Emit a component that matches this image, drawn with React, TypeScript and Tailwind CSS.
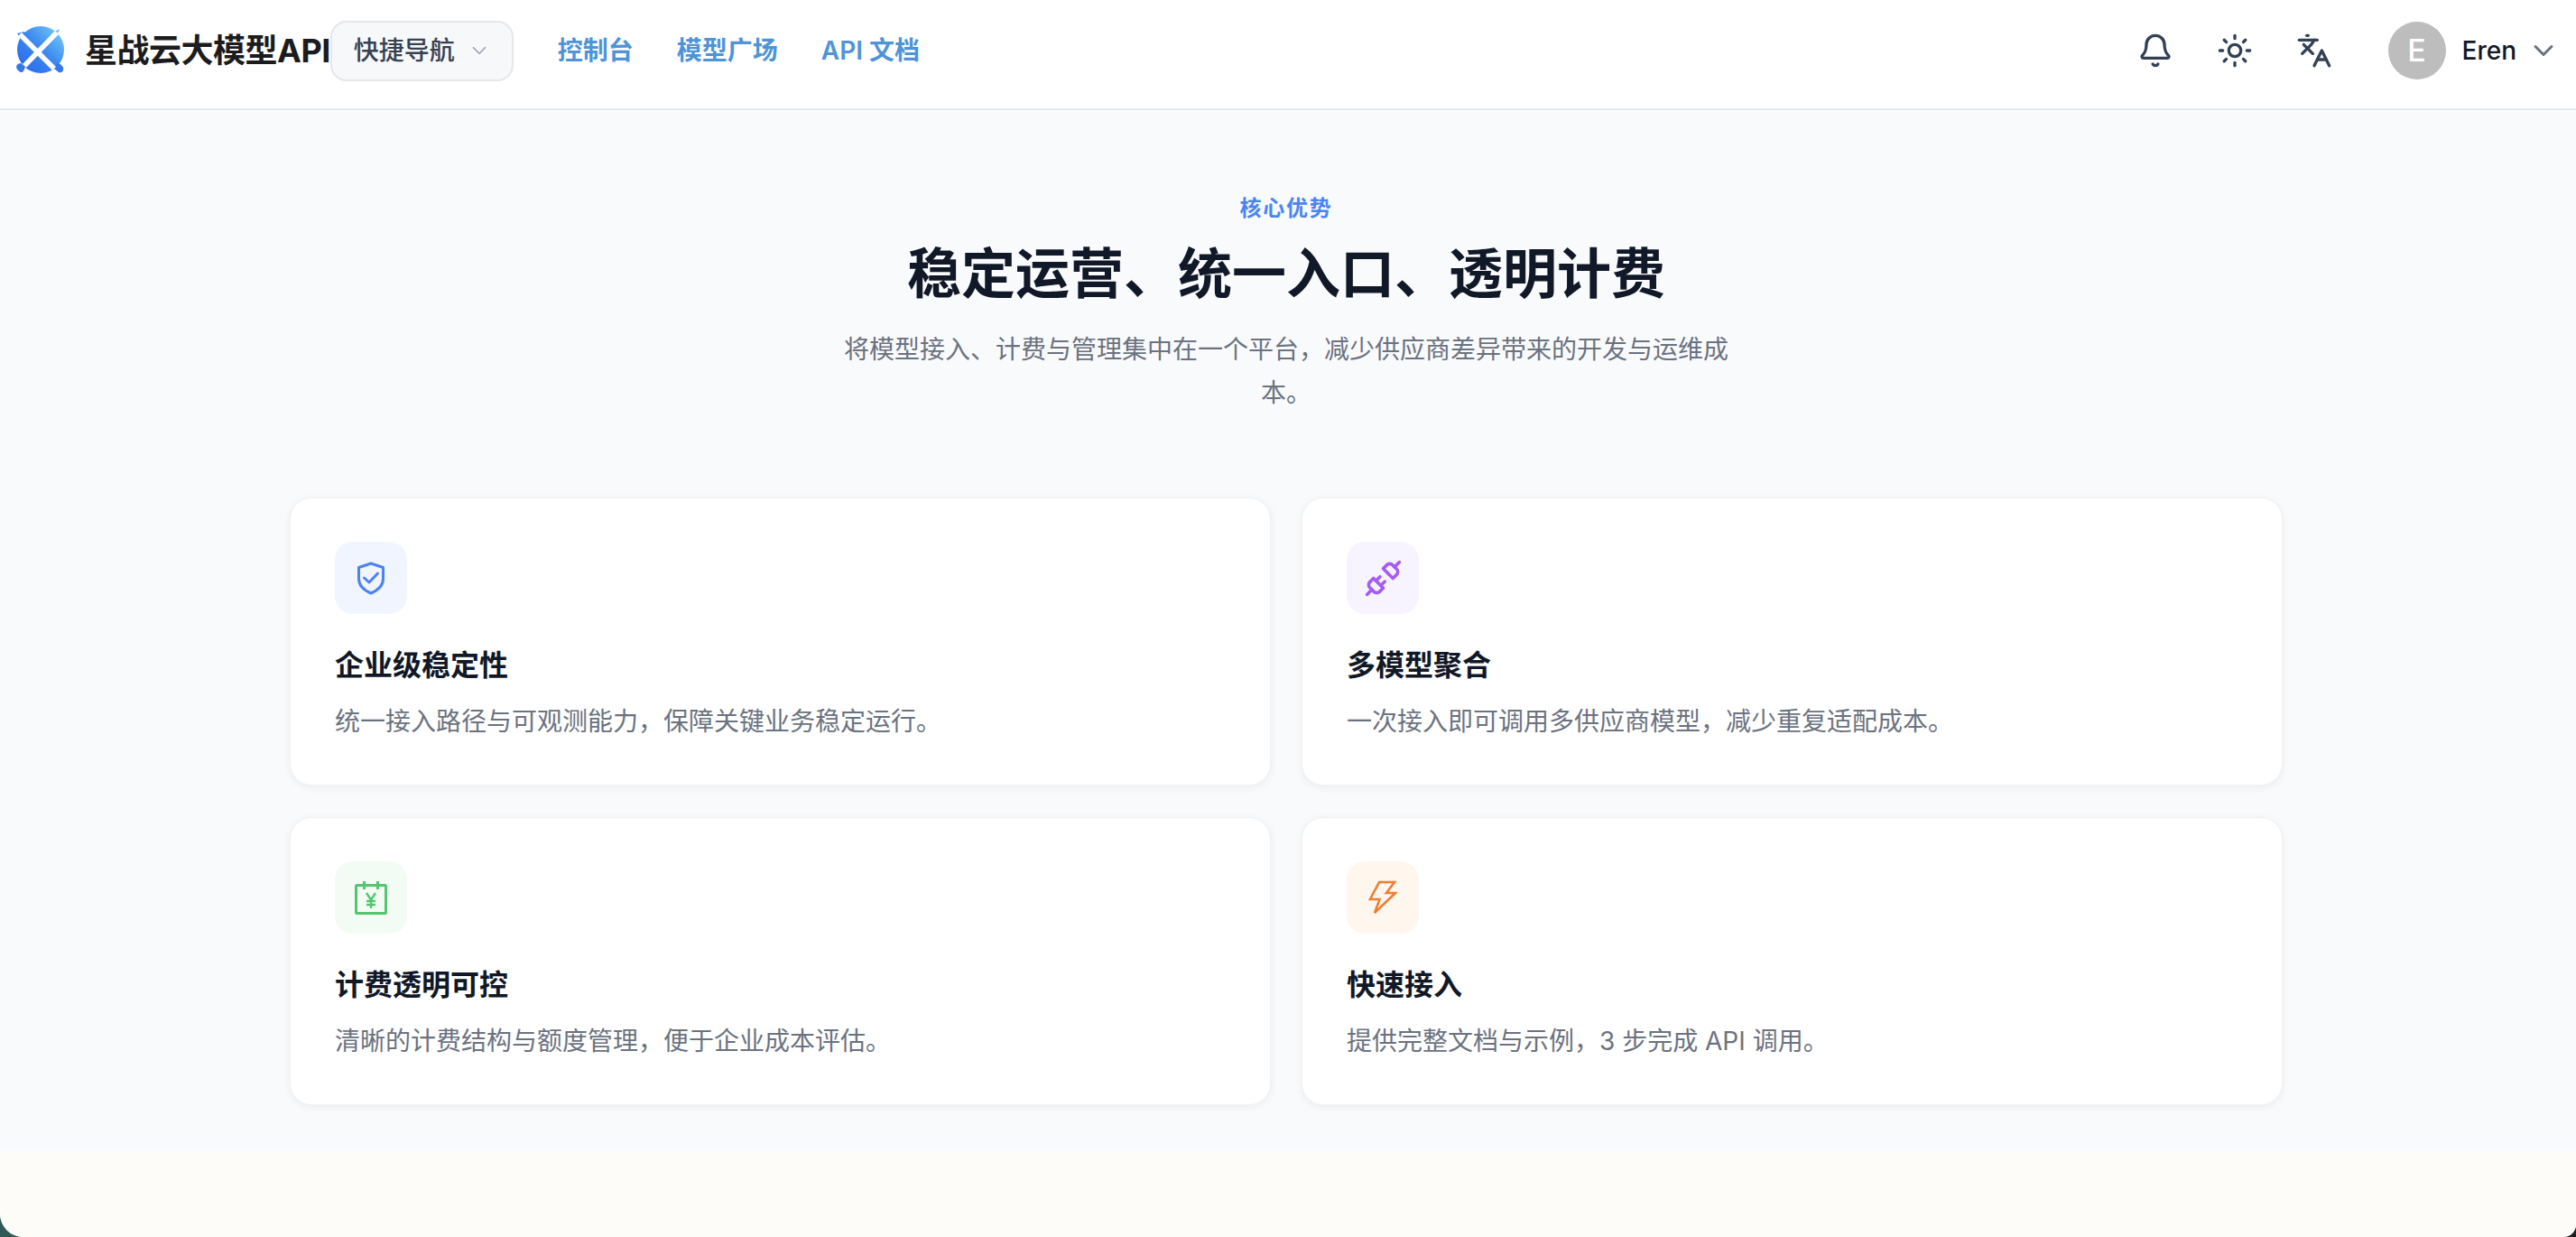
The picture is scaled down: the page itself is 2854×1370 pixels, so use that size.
import { Bell, Sun, Languages, ChevronDown, Unplug } from "lucide-react";

function Logo() {
  return (
    <svg width="60" height="60" viewBox="14 24 60 60" className="shrink-0">
      <defs>
        <linearGradient id="lg" x1="0" y1="1" x2="1" y2="0">
          <stop offset="0" stopColor="#2563eb" />
          <stop offset="0.55" stopColor="#3f8df0" />
          <stop offset="1" stopColor="#7fd6fb" />
        </linearGradient>
      </defs>
      <circle cx="45" cy="53" r="26" fill="url(#lg)" />
      <path d="M19 35 L27 33 L31 40 L25 44 Z" fill="#3b82f0" />
      <path d="M66 30 L62 40 L56 36 L60 33 Z" fill="#6cc4f8" />
      <path d="M20 76 C16 72 19 68 23 68 L28 72 L26 77 C24 79 22 78 20 76 Z" fill="#3577ee" />
      <path d="M70 73 C71 77 68 79 65 78 L60 74 L63 68 C66 68 69 70 70 73 Z" fill="#3577ee" />
      <path d="M22 36 L60 74" stroke="#fff" strokeWidth="5.5" fill="none" />
      <path d="M63 34 L27 71" stroke="#fff" strokeWidth="5.5" fill="none" />
    </svg>
  );
}

function ShieldIcon() {
  return (
    <svg width="32" height="37" viewBox="0 0 32 37" fill="none" stroke="#4d82f0" strokeWidth="3" strokeLinejoin="round" strokeLinecap="round">
      <path d="M16 2 L29.5 6.5 V19 C29.5 27 23 32 16 35 C9 32 2.5 27 2.5 19 V6.5 Z" />
      <path d="M8.5 18 L14 23 L23.5 13" />
    </svg>
  );
}

function YenIcon() {
  return (
    <svg width="36" height="37" viewBox="0 0 36 37" fill="none" stroke="#55c56f" strokeWidth="3">
      <rect x="1.5" y="4.5" width="33" height="31" rx="1" />
      <path d="M10.5 0 V9 M25.5 0 V9" />
      <path d="M13 13 L18 20.5 L23 13 M18 20.5 V30 M13 22 H23 M13 26 H23" strokeWidth="2.4" />
    </svg>
  );
}

function BoltIcon() {
  return (
    <svg width="32" height="39" viewBox="0 0 32 39" fill="none" stroke="#ee7f35" strokeWidth="2.6" strokeLinejoin="miter">
      <path d="M12 2 H29 L20 14 H30 L7 36 L12.5 21 H2 Z" />
    </svg>
  );
}

const cards = [
  { title: "企业级稳定性", desc: "统一接入路径与可观测能力，保障关键业务稳定运行。", bg: "bg-[#f0f5ff]", icon: <ShieldIcon /> },
  { title: "多模型聚合", desc: "一次接入即可调用多供应商模型，减少重复适配成本。", bg: "bg-[#f8f4ff]", icon: <Unplug size={43} color="#a35cf5" strokeWidth={2} /> },
  { title: "计费透明可控", desc: "清晰的计费结构与额度管理，便于企业成本评估。", bg: "bg-[#f2fcf5]", icon: <YenIcon /> },
  { title: "快速接入", desc: "提供完整文档与示例，3 步完成 API 调用。", bg: "bg-[#fff6ed]", icon: <BoltIcon /> },
];

export default function App() {
  return (
    <div className="h-[1370px] w-full overflow-hidden bg-gradient-to-r from-[#2f5a55] to-[#1f1f1f] font-['Inter','Noto_Sans_CJK_SC',sans-serif]">
      <div className="flex h-full flex-col overflow-hidden rounded-bl-[26px] rounded-br-[14px] bg-[#f9fafc]">
        <header className="flex h-[122px] shrink-0 items-center justify-between border-b-2 border-[#e5e7eb] bg-white pb-[8px] pl-[14px] pr-[18px]">
          <div className="flex items-center">
            <Logo />
            <span className="ml-[20px] text-[36px] font-bold leading-none tracking-[-0.5px] text-[#1c1c1e]">星战云大模型API</span>
            <button className="flex h-[67px] w-[203px] items-center rounded-[18px] border-2 border-[#e5e7eb] bg-[#f7f8fa] pl-[24px]">
              <span className="text-[28px] font-medium leading-none text-[#374151]">快捷导航</span>
              <ChevronDown size={26} color="#9ca3af" strokeWidth={1.6} className="ml-[14px]" />
            </button>
            <nav className="ml-[49px] flex items-center gap-[48px] text-[28px] font-semibold leading-none text-[#4d94d8]">
              <span>控制台</span>
              <span>模型广场</span>
              <span>API 文档</span>
            </nav>
          </div>
          <div className="flex items-center">
            <div className="flex items-center gap-[48px] text-[#334155]">
              <Bell size={40} strokeWidth={2} />
              <Sun size={40} strokeWidth={2} />
              <Languages size={40} strokeWidth={2} />
            </div>
            <div className="ml-[62px] flex h-[64px] w-[64px] items-center justify-center rounded-full bg-[#bdbdbd] text-[34px] font-medium leading-none text-white">E</div>
            <span className="ml-[18px] text-[28px] font-medium leading-none text-[#111827]">Eren</span>
            <ChevronDown size={36} color="#6b7280" strokeWidth={2} className="ml-[12px]" />
          </div>
        </header>

        <main className="flex w-[2850px] flex-col items-center pb-[51px] pt-[93px]">
          <p className="text-[24px] font-semibold leading-[32px] tracking-[1.8px] text-[#4b85f5]">核心优势</p>
          <h1 className="mt-[20px] text-[60px] font-bold leading-[72px] text-[#111827]">稳定运营、统一入口、透明计费</h1>
          <p className="mt-[24px] w-[1000px] text-center text-[28px] leading-[48px] text-[#6b7280]">将模型接入、计费与管理集中在一个平台，减少供应商差异带来的开发与运维成本。</p>
          <div className="mt-[92px] grid w-[2208px] grid-cols-2 gap-x-[34px] gap-y-[35px]">
            {cards.map((c) => (
              <div key={c.title} className="h-[319px] rounded-[24px] border border-[#f1f2f4] bg-white px-[49px] py-[48px] shadow-[0_2px_10px_rgba(0,0,0,0.06)]">
                <div className={`flex h-[80px] w-[80px] items-center justify-center rounded-[20px] ${c.bg}`}>{c.icon}</div>
                <h3 className="mt-[37px] text-[32px] font-semibold leading-[40px] text-[#111827]">{c.title}</h3>
                <p className="mt-[20px] text-[28px] leading-[44px] text-[#6b7280]">{c.desc}</p>
              </div>
            ))}
          </div>
        </main>
        <div className="flex-1 bg-[#fdfcf8]" />
      </div>
    </div>
  );
}
